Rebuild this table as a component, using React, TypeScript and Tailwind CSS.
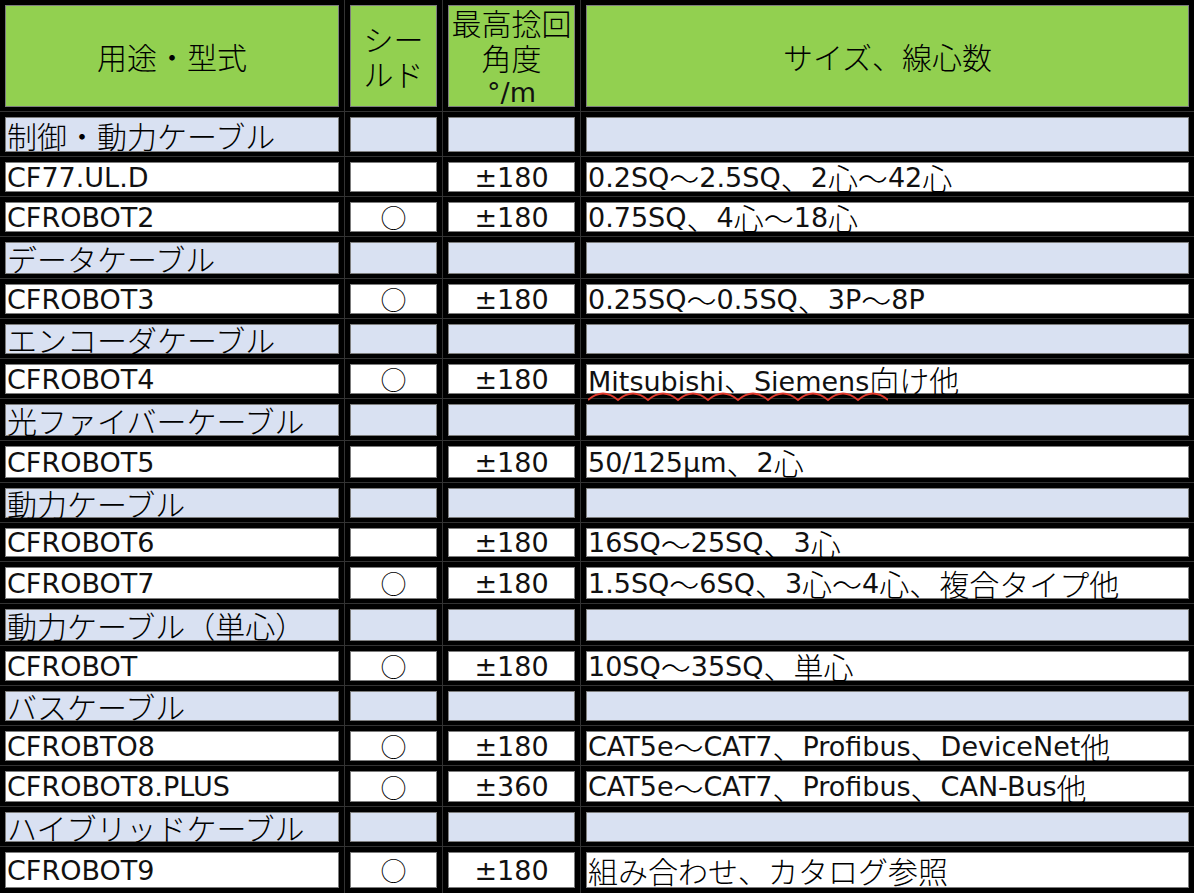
import React from "react";

interface Row {
  cat?: string;
  name?: string;
  shield?: boolean;
  angle?: string;
  spec?: string;
  wavy?: string;
  h: string;
}

const rows: Row[] = [
  { cat: "制御・動力ケーブル", h: "h-[35px]" },
  { name: "CF77.UL.D", angle: "±180", spec: "0.2SQ～2.5SQ、2心～42心", h: "h-[30px]" },
  { name: "CFROBOT2", shield: true, angle: "±180", spec: "0.75SQ、4心～18心", h: "h-[30px]" },
  { cat: "データケーブル", h: "h-[32px]" },
  { name: "CFROBOT3", shield: true, angle: "±180", spec: "0.25SQ～0.5SQ、3P～8P", h: "h-[30px]" },
  { cat: "エンコーダケーブル", h: "h-[30px]" },
  { name: "CFROBOT4", shield: true, angle: "±180", wavy: "Mitsubishi、Siemens", spec: "向け他", h: "h-[30px]" },
  { cat: "光ファイバーケーブル", h: "h-[32px]" },
  { name: "CFROBOT5", angle: "±180", spec: "50/125μm、2心", h: "h-[32px]" },
  { cat: "動力ケーブル", h: "h-[30px]" },
  { name: "CFROBOT6", angle: "±180", spec: "16SQ～25SQ、3心", h: "h-[29px]" },
  { name: "CFROBOT7", shield: true, angle: "±180", spec: "1.5SQ～6SQ、3心～4心、複合タイプ他", h: "h-[32px]" },
  { cat: "動力ケーブル（単心）", h: "h-[32px]" },
  { name: "CFROBOT", shield: true, angle: "±180", spec: "10SQ～35SQ、単心", h: "h-[30px]" },
  { cat: "バスケーブル", h: "h-[30px]" },
  { name: "CFROBTO8", shield: true, angle: "±180", spec: "CAT5e～CAT7、Profibus、DeviceNet他", h: "h-[30px]" },
  { name: "CFROBOT8.PLUS", shield: true, angle: "±360", spec: "CAT5e～CAT7、Profibus、CAN-Bus他", h: "h-[31px]" },
  { cat: "ハイブリッドケーブル", h: "h-[30px]" },
  { name: "CFROBOT9", shield: true, angle: "±180", spec: "組み合わせ、カタログ参照", h: "h-[36px]" },
];

const cjk = /([\u3000-\u30ff\u3400-\u9fff\uff00-\uffef]+)/;

// latin runs and japanese runs need different sizes to match the slide
function Mixed({ text }: { text: string }) {
  const parts = text.split(cjk).filter(Boolean);
  return (
    <>
      {parts.map((p, i) =>
        cjk.test(p) ? (
          <span key={i} className="font-['Noto_Sans_CJK_JP',sans-serif] font-light text-[30px]">
            {p}
          </span>
        ) : (
          <span key={i} className="font-['DejaVu_Sans',sans-serif] font-normal text-[27px] text-[#111]">
            {p}
          </span>
        )
      )}
    </>
  );
}

function Squiggle({ text }: { text: string }) {
  let d = "M0 9";
  for (let i = 0; i < 10; i++) d += " q15 -13 30 0";
  return (
    <span className="relative">
      <Mixed text={text} />
      <svg className="absolute left-0 -bottom-[7px] h-[11px] w-[300px]" viewBox="0 0 300 11" preserveAspectRatio="none">
        <path d={d} fill="none" stroke="#e23b2e" strokeWidth="1.8" />
      </svg>
    </span>
  );
}

function Cell({
  col,
  last,
  h,
  bg,
  className,
  children,
}: {
  col: number;
  last?: boolean;
  h: string;
  bg: string;
  className?: string;
  children?: React.ReactNode;
}) {
  const outer = [
    "pt-[5px] pl-[5px] pr-[5px] border-[#333333]",
    col < 3 ? "border-r" : "",
    last ? "pb-[5px]" : "pb-[4px] border-b",
  ].join(" ");
  return (
    <div className={outer}>
      <div className={`${h} ${bg} box-border border border-[#7d7d7d] flex items-center overflow-visible whitespace-nowrap leading-none text-black ${className ?? ""}`}>
        {children}
      </div>
    </div>
  );
}

export default function App() {
  const green = "bg-[#92d050]";
  const blue = "bg-[#d9e1f2]";
  return (
    <div className="min-h-screen bg-black">
      <div className="grid w-[1194px] grid-cols-[345px_98px_138px_613px] bg-black">
        <Cell col={0} h="h-[102px]" bg={green} className="justify-center text-[#1c2a12]">
          <Mixed text="用途・型式" />
        </Cell>
        <Cell col={1} h="h-[102px]" bg={green} className="justify-center text-[#1c2a12]">
          <div className="flex flex-col items-center leading-[35px]">
            <Mixed text="シー" />
            <Mixed text="ルド" />
          </div>
        </Cell>
        <Cell col={2} h="h-[102px]" bg={green} className="justify-center text-[#1c2a12]">
          <div className="flex flex-col items-center leading-[35px] pt-[2px]">
            <Mixed text="最高捻回" />
            <Mixed text="角度" />
            <Mixed text="°/m" />
          </div>
        </Cell>
        <Cell col={3} h="h-[102px]" bg={green} className="justify-center text-[#1c2a12]">
          <Mixed text="サイズ、線心数" />
        </Cell>

        {rows.map((r, i) => {
          const last = i === rows.length - 1;
          if (r.cat) {
            return (
              <React.Fragment key={i}>
                <Cell col={0} last={last} h={r.h} bg={blue} className="pl-[1px]">
                  <Mixed text={r.cat} />
                </Cell>
                <Cell col={1} last={last} h={r.h} bg={blue} />
                <Cell col={2} last={last} h={r.h} bg={blue} />
                <Cell col={3} last={last} h={r.h} bg={blue} />
              </React.Fragment>
            );
          }
          return (
            <React.Fragment key={i}>
              <Cell col={0} last={last} h={r.h} bg="bg-white" className="pl-[1px]">
                <Mixed text={r.name ?? ""} />
              </Cell>
              <Cell col={1} last={last} h={r.h} bg="bg-white" className="justify-center">
                {r.shield && (
                  <span className="font-['Noto_Sans_CJK_JP',sans-serif] font-light text-[26px]">○</span>
                )}
              </Cell>
              <Cell col={2} last={last} h={r.h} bg="bg-white" className="justify-center">
                <Mixed text={r.angle ?? ""} />
              </Cell>
              <Cell col={3} last={last} h={r.h} bg="bg-white" className="pl-[1px]">
                {r.wavy && <Squiggle text={r.wavy} />}
                <Mixed text={r.spec ?? ""} />
              </Cell>
            </React.Fragment>
          );
        })}
      </div>
    </div>
  );
}
